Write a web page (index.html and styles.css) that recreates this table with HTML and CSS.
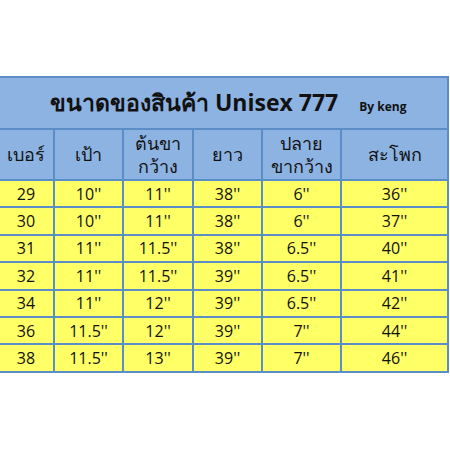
FILE: index.html
```html
<!DOCTYPE html>
<html>
<head>
<meta charset="utf-8">
<link rel="stylesheet" href="styles.css">
</head>
<body>
<table class="size-table">
  <colgroup>
    <col class="c1"><col class="c2"><col class="c3"><col class="c4"><col class="c5"><col class="c6">
  </colgroup>
  <thead>
    <tr class="title-row">
      <th colspan="6"><span class="title">ขนาดของสินค้า Unisex 777</span><span class="by">By keng</span></th>
    </tr>
    <tr class="head-row">
      <th>เบอร์</th>
      <th>เป้า</th>
      <th>ต้นขา<br>กว้าง</th>
      <th>ยาว</th>
      <th>ปลาย<br>ขากว้าง</th>
      <th>สะโพก</th>
    </tr>
  </thead>
  <tbody>
    <tr><td>29</td><td>10''</td><td>11''</td><td>38''</td><td>6''</td><td>36''</td></tr>
    <tr><td>30</td><td>10''</td><td>11''</td><td>38''</td><td>6''</td><td>37''</td></tr>
    <tr><td>31</td><td>11''</td><td>11.5''</td><td>38''</td><td>6.5''</td><td>40''</td></tr>
    <tr><td>32</td><td>11''</td><td>11.5''</td><td>39''</td><td>6.5''</td><td>41''</td></tr>
    <tr><td>34</td><td>11''</td><td>12''</td><td>39''</td><td>6.5''</td><td>42''</td></tr>
    <tr><td>36</td><td>11.5''</td><td>12''</td><td>39''</td><td>7''</td><td>44''</td></tr>
    <tr><td>38</td><td>11.5''</td><td>13''</td><td>39''</td><td>7''</td><td>46''</td></tr>
  </tbody>
</table>
</body>
</html>
```

FILE: styles.css
```css
html, body {
  margin: 0;
  padding: 0;
  background: #ffffff;
}
body {
  padding-top: 76px;
  font-family: "Open Sans", "Noto Sans", "Liberation Sans", sans-serif;
  color: #111;
}
.size-table {
  border-collapse: collapse;
  table-layout: fixed;
  width: 450px;
  margin-left: -3px;
}
.c1 { width: 56px; }
.c2 { width: 69px; }
.c3 { width: 70px; }
.c4 { width: 69px; }
.c5 { width: 79px; }
.c6 { width: 107px; }
.size-table th,
.size-table td {
  border: 2px solid #5b8dc8;
  padding: 0;
  text-align: center;
}
.size-table th {
  background: #8db3e2;
  font-weight: normal;
}
.title-row th {
  height: 50px;
  text-align: left;
  padding-left: 51px;
}
.title {
  font-size: 23px;
  font-weight: bold;
}
.by {
  font-size: 12px;
  font-weight: bold;
  margin-left: 21px;
}
.head-row th {
  height: 49px;
  font-size: 18px;
  line-height: 23px;
}
.size-table td {
  background: #ffff66;
  height: 25.4px;
  font-size: 16px;
  line-height: 20px;
}
```
